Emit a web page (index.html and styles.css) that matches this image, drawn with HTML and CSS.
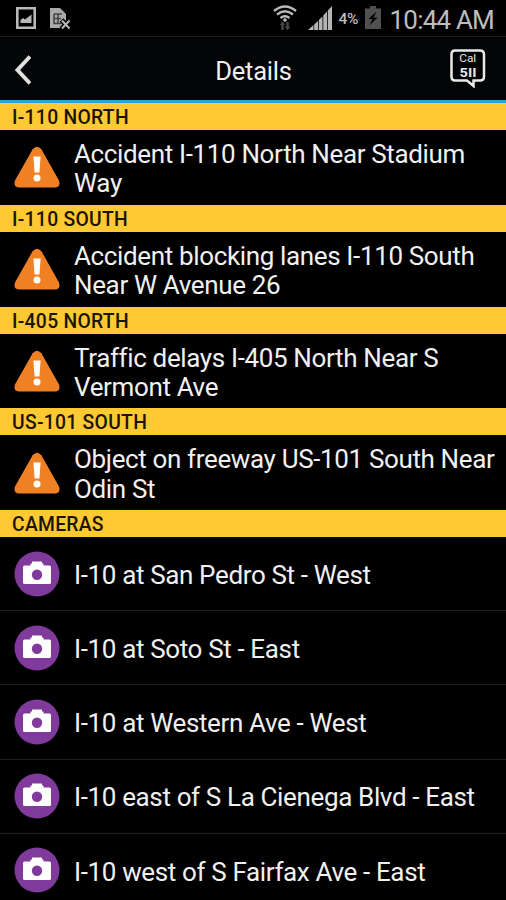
FILE: index.html
```html
<!DOCTYPE html>
<html lang="en">
<head>
  <meta charset="UTF-8">
  <meta name="viewport" content="width=device-width, initial-scale=1.0">
  <title>Details</title>
  <link rel="stylesheet" href="styles.css">
</head>
<body>
  <!-- Shared icons -->
  <svg class="icon-defs">
    <symbol id="warning" viewBox="0 0 46 42">
      <path d="M18.6 3.2 Q23 -1.8 27.4 3.2 L45 34.5 Q47 41.5 40.5 41.5 H5.5 Q-1 41.5 1 34.5 Z" fill="#ef8024"/>
      <path d="M19.4 10.5 H26.6 L25.4 26.5 H20.6 Z" fill="#fff"/>
      <circle cx="23" cy="32" r="3.5" fill="#fff"/>
    </symbol>
    <symbol id="camera" viewBox="0 0 46 46">
      <circle cx="23" cy="23" r="22.5" fill="#803a9b"/>
      <path d="M10.5 14.5 H16.5 V13 Q16.5 12.5 17 12.5 H18 V11 Q18 10.5 18.5 10.5 H27.5 Q28 10.5 28 11 V12.5 H29 Q29.5 12.5 29.5 13 V14.5 H35.5 Q37 14.5 37 16 V31.5 Q37 33 35.5 33 H10.5 Q9 33 9 31.5 V16 Q9 14.5 10.5 14.5 Z" fill="#fff"/>
      <circle cx="23" cy="23.8" r="5.2" fill="#803a9b"/>
    </symbol>
  </svg>

  <div class="screen">
    <!-- Status Bar -->
    <div class="status-bar">
      <svg class="picture-icon" width="20" height="22" viewBox="0 0 20 22">
        <path d="M1.3 1.3 H18.7 V20.7 H1.3 Z" fill="none" stroke="#b8b8b8" stroke-width="2.6"/>
        <path d="M4.5 16 V13 L7 11 L9 12.5 L15.5 7.5 V16 Z" fill="#b8b8b8"/>
      </svg>
      <svg class="sim-icon" width="22" height="22" viewBox="0 0 22 22">
        <path d="M1 0 H11 L17 6 V20 H1 Z" fill="#aaa"/>
        <path d="M5 6 H13 M5 6 V15.5 H12 M5 10.5 H12 M9 6 V15" fill="none" stroke="#444" stroke-width="1.5"/>
        <path d="M12.5 12 L21 21 M21 12 L12.5 21" stroke="#000" stroke-width="5"/>
        <path d="M13 12.5 L20.5 20.5 M20.5 12.5 L13 20.5" stroke="#b8b8b8" stroke-width="2"/>
      </svg>
      <div class="status-right">
        <svg class="wifi-icon" width="24" height="26" viewBox="0 0 24 26">
          <g fill="none" stroke="#bbb" stroke-width="2.3">
            <path d="M1 6 Q12 -3 23 6"/>
            <path d="M4 9.5 Q12 3 20 9.5"/>
            <path d="M7.5 13 Q12 9.5 16.5 13"/>
          </g>
          <circle cx="12" cy="15" r="1.8" fill="#bbb"/>
          <path d="M9.5 25 V19 M14.5 17 V24" stroke="#444" stroke-width="2.5"/>
          <path d="M6.5 20 L9.5 16.5 L12.5 20 Z M11.5 21.5 L14.5 25.5 L17.5 21.5 Z" fill="#444"/>
        </svg>
        <svg class="signal-icon" width="24" height="24" viewBox="0 0 24 24">
          <path d="M0 24 L5.5 19 V24 Z M6.2 18.5 L10 15 V24 H6.2 Z M10.8 14 L14.5 10.5 V24 H10.8 Z M15.3 9.5 L19 5.5 V24 H15.3 Z M19.8 4.5 L24 0 V24 H19.8 Z" fill="#b5b5b5"/>
        </svg>
        <span class="battery-level">4%</span>
        <svg class="battery-icon" width="16" height="23" viewBox="0 0 16 23">
          <path d="M5 0 H11 V2.5 H16 V23 H0 V2.5 H5 Z" fill="#505050"/>
          <path d="M11.5 5.5 L3.5 13 H7.5 L4.5 19.5 L12.5 11.5 H8.5 Z" fill="#000"/>
        </svg>
        <span class="clock">10:44 AM</span>
      </div>
    </div>

    <!-- Header -->
    <div class="header">
      <svg class="back-icon" width="18" height="30" viewBox="0 0 18 30">
        <path d="M17 1.5 L4.5 15 L17 28.5" fill="none" stroke="#e0e0e0" stroke-width="4"/>
      </svg>
      <h1>Details</h1>
      <svg class="call-icon" width="36" height="39" viewBox="0 0 36 39">
        <path d="M5 1.5 H30 Q34 1.5 34 5.5 V27.5 Q34 31.5 30 31.5 H23.5 V37 L17 31.5 H5 Q1.5 31.5 1.5 27.5 V5.5 Q1.5 1.5 5 1.5 Z" fill="#000" stroke="#e8e8e8" stroke-width="2.5"/>
        <text class="call-text" x="17.7" y="12.5" textLength="17" lengthAdjust="spacingAndGlyphs">Cal</text>
        <text class="call-number" x="9.5" y="28" textLength="17" lengthAdjust="spacingAndGlyphs">5II</text>
      </svg>
    </div>

    <!-- Incidents -->
    <h2>I-110 NORTH</h2>
    <div class="incident">
      <svg class="warning-icon"><use href="#warning"/></svg>
      <p>Accident I-110 North Near Stadium<br>Way</p>
    </div>
    <h2>I-110 SOUTH</h2>
    <div class="incident">
      <svg class="warning-icon"><use href="#warning"/></svg>
      <p>Accident blocking lanes I-110 South<br>Near W Avenue 26</p>
    </div>
    <h2>I-405 NORTH</h2>
    <div class="incident">
      <svg class="warning-icon"><use href="#warning"/></svg>
      <p>Traffic delays I-405 North Near S<br>Vermont Ave</p>
    </div>
    <h2>US-101 SOUTH</h2>
    <div class="incident">
      <svg class="warning-icon"><use href="#warning"/></svg>
      <p>Object on freeway US-101 South Near<br>Odin St</p>
    </div>

    <!-- Cameras -->
    <h2>CAMERAS</h2>
    <div class="camera">
      <svg class="camera-icon"><use href="#camera"/></svg>
      <p>I-10 at San Pedro St - West</p>
    </div>
    <div class="camera">
      <svg class="camera-icon"><use href="#camera"/></svg>
      <p>I-10 at Soto St - East</p>
    </div>
    <div class="camera">
      <svg class="camera-icon"><use href="#camera"/></svg>
      <p>I-10 at Western Ave - West</p>
    </div>
    <div class="camera">
      <svg class="camera-icon"><use href="#camera"/></svg>
      <p>I-10 east of S La Cienega Blvd - East</p>
    </div>
    <div class="camera">
      <svg class="camera-icon"><use href="#camera"/></svg>
      <p>I-10 west of S Fairfax Ave - East</p>
    </div>
  </div>
</body>
</html>
```
FILE: styles.css
```css
* {
  box-sizing: border-box;
}
body {
  margin: 0;
  font-family: Roboto, sans-serif;
  background-color: #000;
  color: #f0f0f0;
}
svg {
  display: block;
  flex-shrink: 0;
}
.icon-defs {
  display: none;
}
.screen {
  height: 900px;
  overflow: hidden;
}
.status-bar {
  display: flex;
  align-items: flex-start;
  height: 37px;
  padding: 7px 12px 0 16px;
  border-bottom: 1px solid #1c1c1c;
}
.sim-icon {
  margin-left: 13px;
  margin-top: 1px;
}
.status-right {
  display: flex;
  align-items: flex-start;
  margin-left: auto;
  margin-top: -2px;
  color: #bdbdbd;
}
.signal-icon {
  margin: 1px 0 0 11px;
}
.battery-level {
  width: 22px;
  margin: 4px 0 0 7px;
  font-size: 15.5px;
  font-weight: 500;
  line-height: 20px;
  letter-spacing: -0.3px;
}
.battery-icon {
  margin: 1px 0 0 4px;
}
.clock {
  margin: 0 0 0 9px;
  font-size: 26px;
  line-height: 30px;
  letter-spacing: -0.8px;
  white-space: nowrap;
}
.header {
  display: grid;
  grid-template-columns: 36px 1fr 36px;
  align-items: center;
  height: 66.1px;
  padding: 0 20px 0 13px;
  background-color: #030405;
  border-bottom: 3px solid #2ba6cb;
}
.header h1 {
  margin: 4px 0 0 8px;
  font-size: 25.5px;
  font-weight: 400;
  line-height: 30px;
  letter-spacing: -0.2px;
  text-align: center;
}
.back-icon {
  margin-top: 2px;
}
.call-text, .call-number {
  fill: #e8e8e8;
}
.call-text {
  font-size: 10.5px;
  text-anchor: middle;
}
.call-number {
  font-size: 13px;
  font-weight: 700;
}
h2 {
  height: 27px;
  margin: 0;
  padding-left: 12px;
  background-color: #ffc933;
  color: #1a1400;
  font-size: 19.3px;
  font-weight: 500;
  line-height: 29.5px;
  letter-spacing: 0.3px;
}
.incident, .camera {
  display: flex;
  align-items: center;
  padding-left: 14px;
}
.incident {
  height: 74.8px;
}
.camera {
  height: 74.1px;
  border-bottom: 1px solid #202020;
}
.warning-icon {
  width: 46px;
  height: 42px;
}
.camera-icon {
  width: 46px;
  height: 46px;
}
.incident p, .camera p {
  margin: 4px 0 0 14px;
  font-size: 26px;
  line-height: 29.4px;
  letter-spacing: -0.36px;
  white-space: nowrap;
}
.camera p {
  margin-top: 4px;
}
```
